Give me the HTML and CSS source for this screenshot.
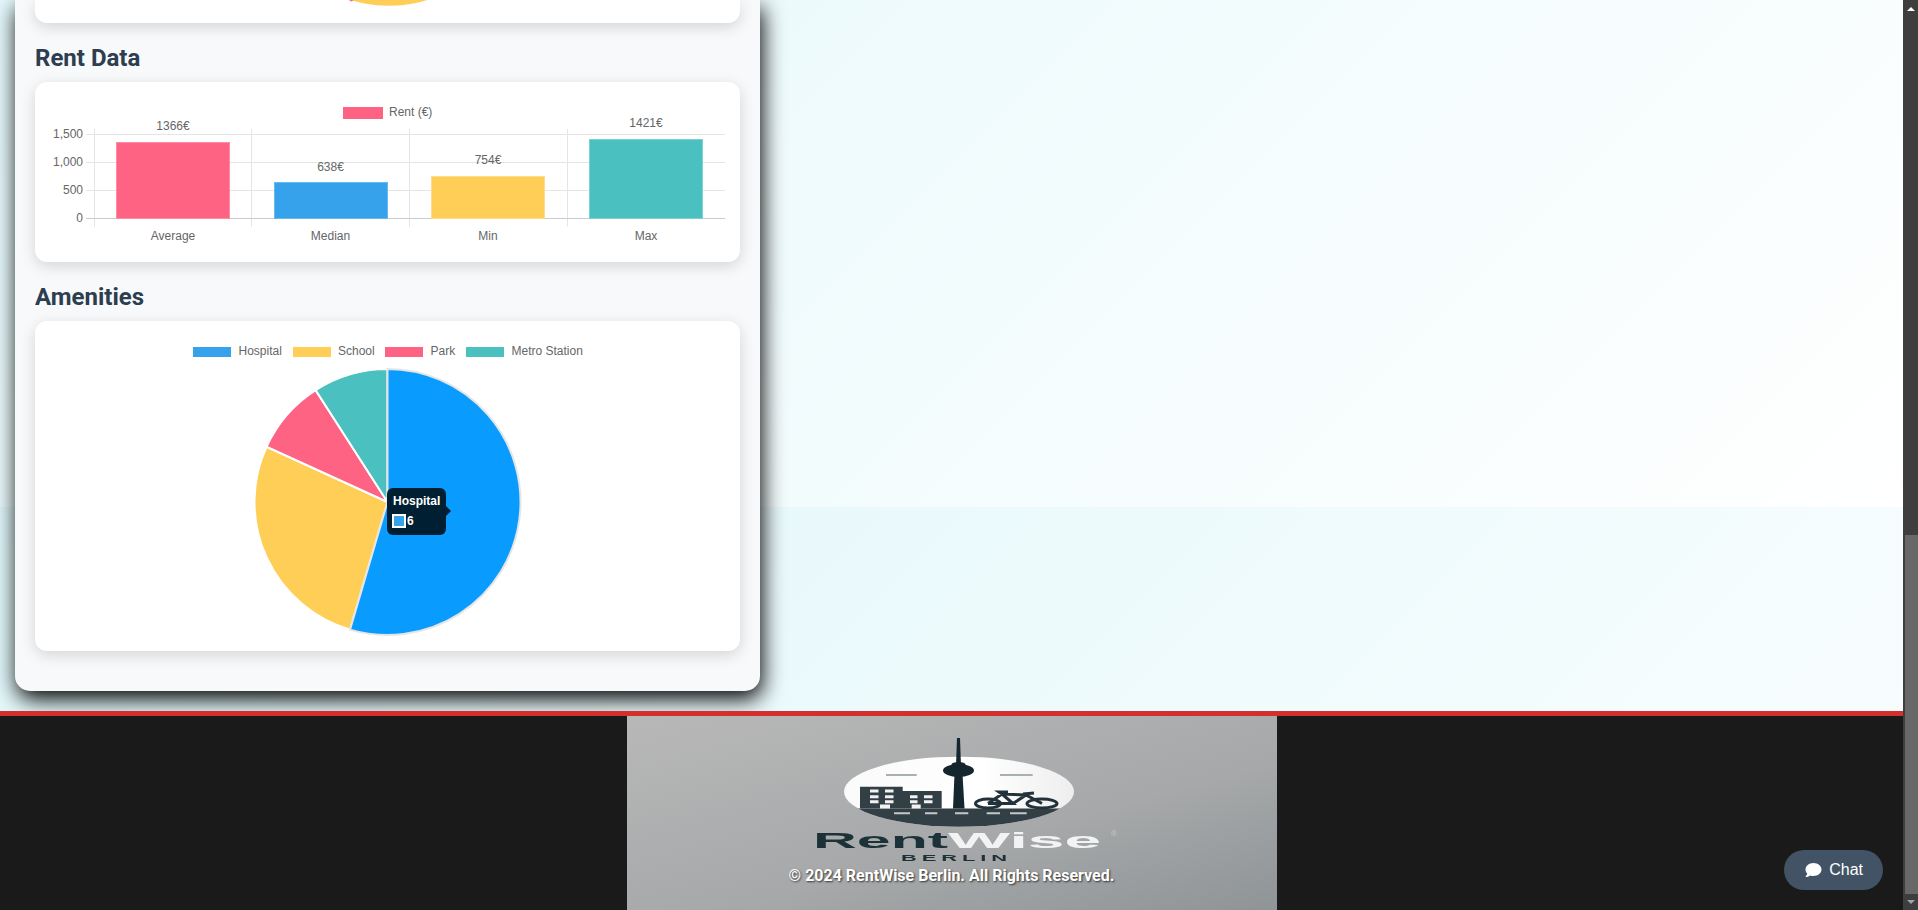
FILE: index.html

```html
<!DOCTYPE html>
<html lang="en">
<head>
    <meta charset="UTF-8">
    <meta name="viewport" content="width=device-width, initial-scale=1.0">
    <title>RentWise Berlin - District Details</title>
    <link rel="stylesheet" href="styles.css">
</head>
<body>
    <div class="page">
        <main class="content">
            <section class="panel">
                <!-- bottom of the chart above, the page is scrolled past it -->
                <div class="card card-cut">
                    <svg class="chart" viewBox="0 0 705 23" height="23">
                        <circle cx="354" cy="-126.3" r="132" fill="#FFCE56"/>
                        <polygon points="314,0 319,0 316,1.5" fill="#FF6384"/>
                    </svg>
                </div>

                <h2>Rent Data</h2>
                <div class="card">
                    <svg class="chart" viewBox="0 0 705 180" height="180">
                        <rect x="308" y="25" width="40" height="12" fill="#FF6384"/>
                        <text x="354" y="34">Rent (€)</text>

                        <path class="grid" d="M59.5 47V144.5M216.5 47V144.5M374.5 47V144.5M532.5 47V144.5"/>
                        <path class="grid" d="M51 52.5H690M51 80.5H690M51 108.5H690"/>
                        <path class="axis" d="M51 136.5H690"/>

                        <rect class="bar" x="81.5" y="60.5" width="113" height="76" fill="#FF6384" stroke="#ff8aa3"/>
                        <rect class="bar" x="239.5" y="100.5" width="113" height="36" fill="#36A2EB" stroke="#68b9f0"/>
                        <rect class="bar" x="396.5" y="94.5" width="113" height="42" fill="#FFCE56" stroke="#ffdc85"/>
                        <rect class="bar" x="554.5" y="57.5" width="113" height="79" fill="#4BC0C0" stroke="#7ad2d2"/>

                        <text class="end" x="48" y="56">1,500</text>
                        <text class="end" x="48" y="84">1,000</text>
                        <text class="end" x="48" y="112">500</text>
                        <text class="end" x="48" y="140">0</text>

                        <text class="mid" x="138" y="48">1366€</text>
                        <text class="mid" x="295.5" y="89">638€</text>
                        <text class="mid" x="453" y="82">754€</text>
                        <text class="mid" x="611" y="45">1421€</text>

                        <text class="mid" x="138" y="158">Average</text>
                        <text class="mid" x="295.5" y="158">Median</text>
                        <text class="mid" x="453" y="158">Min</text>
                        <text class="mid" x="611" y="158">Max</text>
                    </svg>
                </div>

                <h2>Amenities</h2>
                <div class="card card-pie">
                    <svg class="chart" viewBox="0 0 705 330" height="330">
                        <rect x="158" y="26" width="38" height="10" fill="#36A2EB"/>
                        <text x="203.5" y="34">Hospital</text>
                        <rect x="258" y="26" width="38" height="10" fill="#FFCE56"/>
                        <text x="303" y="34">School</text>
                        <rect x="350" y="26" width="38" height="10" fill="#FF6384"/>
                        <text x="395.5" y="34">Park</text>
                        <rect x="431" y="26" width="38" height="10" fill="#4BC0C0"/>
                        <text x="476.5" y="34">Metro Station</text>

                        <path class="slice" fill="#FFCE56" d="M352.5 181L315.03 308.61A133 133 0 0 1 231.52 125.75Z"/>
                        <path class="slice" fill="#FF6384" d="M352.5 181L231.52 125.75A133 133 0 0 1 280.6 69.11Z"/>
                        <path class="slice" fill="#4BC0C0" d="M352.5 181L280.6 69.11A133 133 0 0 1 352.5 48Z"/>
                        <path class="slice slice-hover" fill="#0A9BFF" d="M352.5 181L352.5 48A133 133 0 1 1 315.03 308.61Z"/>
                    </svg>
                    <div class="tooltip">
                        <div class="tooltip-title">Hospital</div>
                        <div class="tooltip-row"><span class="tooltip-swatch"></span>6</div>
                    </div>
                </div>
            </section>
        </main>

        <footer class="footer">
            <div class="footer-art">
                <svg class="logo" viewBox="0 0 650 194" width="650" height="194">
                    <defs>
                        <clipPath id="logoClip"><ellipse cx="332" cy="75.7" rx="115" ry="35"/></clipPath>
                        <linearGradient id="logoFill" x1="0" x2="1" y1="0" y2="0">
                            <stop offset="0" stop-color="#fafafa"/>
                            <stop offset="0.6" stop-color="#ffffff"/>
                            <stop offset="1" stop-color="#eeeeee"/>
                        </linearGradient>
                        <filter id="soft"><feGaussianBlur stdDeviation="0.45"/></filter>
                    </defs>
                    <g filter="url(#soft)">
                        <ellipse cx="332" cy="75.7" rx="115" ry="35" fill="url(#logoFill)"/>
                        <rect x="210" y="92.5" width="245" height="20" fill="#333f45" clip-path="url(#logoClip)"/>
                        <path class="logo-grey" d="M259 59H289.7M373 59H405.7"/>

                        <path class="logo-dark" d="M233 92.5V70.7H275.7V75H314.7V92.5Z"/>
                        <path class="logo-white" d="M243 73.5h8.5v3h-8.5zM258 73.5h8.5v3h-8.5zM243 79.2h8.5v3h-8.5zM258 79.2h8.5v3h-8.5zM243 84.2h8.5v3h-8.5zM258 84.2h8.5v3h-8.5zM283 79.2h7.5v3h-7.5zM297 79.2h8.5v3h-8.5zM283 84.2h7.5v3h-7.5zM297 84.2h8.5v3h-8.5zM253 88.5h10v4h-10zM284.7 88.5h9v4h-9z"/>

                        <g class="logo-tower">
                            <path d="M329 50L330 22H333L334 50Z"/>
                            <ellipse cx="331.5" cy="54.5" rx="15.5" ry="6.5"/>
                            <ellipse cx="331.5" cy="48.5" rx="7" ry="2.5"/>
                            <path d="M327.5 58H335.5L337.5 92.5H326Z"/>
                        </g>

                        <g class="logo-bike">
                            <ellipse cx="361" cy="87.5" rx="12.5" ry="4.5"/>
                            <ellipse cx="415" cy="87.5" rx="15" ry="4.5"/>
                            <path d="M361 87.5L375 78L399 79L415 87.5M375 78L386 87.5H361M386 87.5L399 79M375 78L372 76H381M396 78L407 77"/>
                        </g>

                        <path class="logo-road" d="M267 97.3H283M298 97.3H310.3M328 97.3H341.3M359.7 97.3H373M383 97.3H399.7"/>

                        <text class="logo-word logo-rent" x="186" y="131.5" textLength="135" lengthAdjust="spacingAndGlyphs">Rent</text>
                        <text class="logo-word logo-wise" x="321" y="131.5" textLength="153" lengthAdjust="spacingAndGlyphs">Wise</text>
                        <text class="logo-mark" x="484" y="120">®</text>
                        <text class="logo-city" x="274" y="145" textLength="111" lengthAdjust="spacingAndGlyphs">BERLIN</text>
                    </g>
                </svg>
                <p class="copyright">© 2024 RentWise Berlin. All Rights Reserved.</p>
            </div>
        </footer>
    </div>

    <div class="scrollbar">
        <div class="scroll-btn"><span class="arrow-up"></span></div>
        <div class="scroll-thumb"></div>
        <div class="scroll-btn scroll-btn-end"><span class="arrow-down"></span></div>
    </div>

    <button class="chat-btn" type="button">
        <svg class="chat-icon" viewBox="0 0 512 512" width="17" height="17"><path d="M256 32C114.6 32 0 125.1 0 240c0 49.6 21.4 95 57 130.7C44.5 421.1 2.7 466 2.2 466.5c-2.2 2.3-2.8 5.7-1.5 8.7S4.8 480 8 480c66.3 0 116-31.8 140.6-51.4 32.7 12.3 69 19.4 107.4 19.4 141.4 0 256-93.1 256-208S397.4 32 256 32z"/></svg>
        Chat
    </button>
</body>
</html>
```

FILE: styles.css

```css
/* page frame */
html, body {
    height: 100%;
}

body {
    margin: 0;
    display: flex;
    overflow: hidden;
    font-family: "Roboto", "Liberation Sans", sans-serif;
    background-color: #1a1a1a;
}

.page {
    flex: 1;
    min-width: 0;
    display: flex;
    flex-direction: column;
}

/* gradient tile repeats, the seam sits at 507px after scrolling */
.content {
    flex: 1;
    min-height: 0;
    overflow: hidden;
    padding: 0 0 20px 15px;
    background-image: linear-gradient(135deg, #e0f7fa, #ffffff);
    background-size: 100% 910px;
    background-position: 0 507px;
}

.panel {
    width: 745px;
    box-sizing: border-box;
    padding: 0 20px 40px;
    background-color: #f8f9fa;
    border-radius: 0 0 15px 15px;
    box-shadow: 2px 8px 22px rgba(0, 0, 0, 1);
}

.panel h2 {
    margin: 23px 0 12px;
    font-size: 24px;
    line-height: 24px;
    font-weight: 700;
    color: #2c3e50;
}

/* chart cards */
.card {
    background-color: #fff;
    border-radius: 12px;
    box-shadow: 0 4px 15px rgba(0, 0, 0, 0.15);
}

.card-cut {
    border-radius: 0 0 12px 12px;
}

.card-pie {
    position: relative;
}

.chart {
    display: block;
    width: 100%;
}

.chart text {
    font-family: "Liberation Sans", Arial, sans-serif;
    font-size: 12px;
    fill: #666;
}

.chart text.end {
    text-anchor: end;
}

.chart text.mid {
    text-anchor: middle;
}

.grid {
    fill: none;
    stroke: #e5e5e5;
    stroke-width: 1;
}

.axis {
    fill: none;
    stroke: #cbcbcb;
    stroke-width: 1;
}

.bar {
    stroke-width: 1;
}

.slice {
    stroke: #fff;
    stroke-width: 2;
}

.slice-hover {
    stroke: #e5e5e5;
}

/* chart tooltip */
.tooltip {
    position: absolute;
    left: 352px;
    top: 167px;
    width: 59px;
    height: 47px;
    box-sizing: border-box;
    padding: 6px;
    background-color: #011f33;
    border-radius: 6px;
    color: #fff;
    font-family: "Liberation Sans", Arial, sans-serif;
    font-size: 12px;
    line-height: 14px;
}

.tooltip::after {
    content: "";
    position: absolute;
    left: 100%;
    top: 18px;
    border: 5px solid transparent;
    border-left-color: #011f33;
    border-right-width: 0;
}

.tooltip-title {
    font-weight: 700;
    margin-bottom: 6px;
}

.tooltip-row {
    display: flex;
    align-items: center;
    font-weight: 700;
}

.tooltip-swatch {
    width: 10px;
    height: 10px;
    margin: 0 1px 0 -1px;
    background-color: #36A2EB;
    border: 2px solid #fff;
}

/* footer */
.footer {
    flex: none;
    height: 194px;
    border-top: 5px solid #d32f2f;
    display: flex;
    justify-content: center;
    background-color: #1a1a1a;
}

.footer-art {
    position: relative;
    width: 650px;
    display: flex;
    flex-direction: column;
    justify-content: flex-end;
    align-items: center;
    background-image: linear-gradient(165deg, #b8b8b8, #a6a8a9 60%, #8f9497);
}

.logo {
    position: absolute;
    left: 0;
    top: 0;
}

.logo-grey {
    fill: none;
    stroke: #a9b0b2;
    stroke-width: 2;
}

.logo-dark {
    fill: #333f45;
}

.logo-white {
    fill: #f2f2f2;
}

.logo-tower {
    fill: #15252d;
}

.logo-bike {
    fill: none;
    stroke: #22323a;
    stroke-width: 3;
}

.logo-road {
    fill: none;
    stroke: #c4c8c9;
    stroke-width: 2;
}

.logo-word {
    font-family: "Liberation Sans", Arial, sans-serif;
    font-weight: 700;
    font-size: 22px;
}

.logo-rent {
    fill: #1f3338;
}

.logo-wise {
    fill: #f2f4f4;
}

.logo-mark {
    font-family: "Liberation Sans", Arial, sans-serif;
    font-size: 8px;
    fill: #c6c9ca;
}

.logo-city {
    font-family: "Liberation Sans", Arial, sans-serif;
    font-weight: 700;
    font-size: 9px;
    letter-spacing: 2px;
    fill: #1f3338;
}

.copyright {
    position: relative;
    margin: 0 0 24px;
    font-size: 16px;
    line-height: 20px;
    font-weight: 700;
    color: #fff;
    text-shadow: 1px 1px 2px rgba(0, 0, 0, 0.7);
}

/* scrollbar, the screenshot has the page scrolled down */
.scrollbar {
    flex: none;
    width: 15px;
    display: flex;
    flex-direction: column;
    background-color: #3e3e3e;
}

.scroll-btn {
    height: 17px;
    display: flex;
    justify-content: center;
    align-items: center;
}

.scroll-btn-end {
    height: 16px;
}

.scroll-thumb {
    height: 359px;
    margin-top: auto;
    margin-left: 2px;
    background-color: #686868;
}

.arrow-up {
    border: 4px solid transparent;
    border-top-width: 0;
    border-bottom-color: #fff;
}

.arrow-down {
    border: 4px solid transparent;
    border-bottom-width: 0;
    border-top-color: #a3a3a3;
}

/* chat button */
.chat-btn {
    position: fixed;
    right: 35px;
    bottom: 20px;
    display: flex;
    align-items: center;
    gap: 7px;
    padding: 12px 20px 12px 21px;
    border: none;
    border-radius: 25px;
    background-color: #415364;
    color: #fff;
    font-family: "Liberation Sans", Arial, sans-serif;
    font-size: 16px;
    line-height: 16px;
    cursor: pointer;
}

.chat-icon {
    fill: #fff;
    height: 16px;
}
```
